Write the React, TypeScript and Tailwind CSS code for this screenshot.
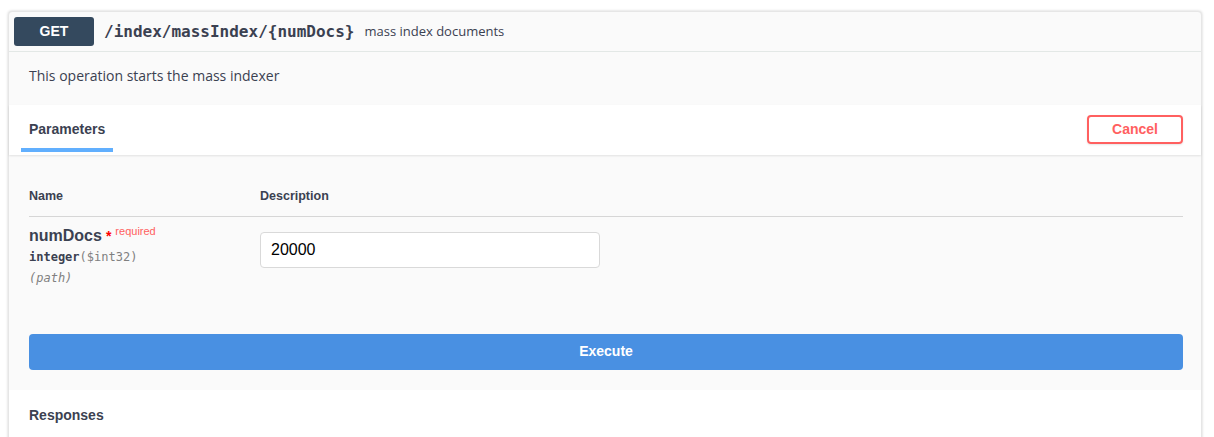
import React from "react";

export default function App() {
  const sans = { fontFamily: '"Liberation Sans", Arial, sans-serif' };
  return (
    <div className="w-[1214px] h-[437px] bg-white overflow-hidden pt-[11px] pl-[8px] pr-[12px]" style={sans}>
      <div className="border border-[#e6e6e6] rounded-[4px] bg-[#fafafa] shadow-[0_0_3px_rgba(0,0,0,0.19)] text-[#3b4151]">
        {/* summary */}
        <div className="flex items-center p-[5px] border-b border-[#e3e8e6]">
          <span className="w-[80px] h-[29px] rounded-[3px] bg-[#34495e] text-white text-[14px] font-bold flex items-center justify-center">GET</span>
          <span className="ml-[10px] text-[16px] font-semibold text-[#3b4151]" style={{ fontFamily: '"DejaVu Sans Mono", monospace' }}>/index/massIndex/&#123;numDocs&#125;</span>
          <span className="ml-[10px] text-[13px] text-[#3b4151]" style={{ fontFamily: '"Open Sans", sans-serif' }}>mass index documents</span>
        </div>
        {/* description */}
        <div className="px-[20px] h-[53px] pt-[14px] text-[14px] leading-[20px]" style={{ fontFamily: '"Open Sans", sans-serif' }}>
          This operation starts the mass indexer
        </div>
        {/* params header */}
        <div className="h-[50px] bg-white shadow-[0_1px_2px_rgba(0,0,0,0.1)] flex items-center justify-between pl-[12px] pr-[18px]">
          <div className="self-stretch flex flex-col justify-end">
            <div className="px-[8px] text-[14px] font-bold pb-[8px]">Parameters</div>
            <div className="h-[4px] w-[92px] bg-[#61affe] mb-[3px]"></div>
          </div>
          <button className="w-[96px] h-[29px] border-2 border-[#ff6060] rounded-[4px] text-[#ff6060] text-[14px] font-bold bg-transparent shadow-[0_1px_2px_rgba(0,0,0,0.1)] -mt-[1px]">Cancel</button>
        </div>
        {/* table */}
        <div className="pl-[20px] pr-[18px] pt-[32px]">
          <div className="flex text-[12.5px] font-bold border-b border-[#d6d6d6] pb-[10px]">
            <div className="w-[231px]">Name</div>
            <div>Description</div>
          </div>
          <div className="flex pt-[9px]">
            <div className="w-[231px]">
              <div className="flex items-start">
                <span className="text-[16px] font-bold leading-[20px]">numDocs</span>
                <span className="text-[#ff0000] text-[14px] font-bold ml-[4px] leading-[16px] mt-[2px]">*</span>
                <span className="text-[#ff6060] text-[11px] ml-[4px] leading-[12px] -mt-[1px]">required</span>
              </div>
              <div className="text-[12px] mt-[3px] leading-[16px]" style={{ fontFamily: '"DejaVu Sans Mono", monospace' }}>
                <span className="font-bold">integer</span>
                <span className="text-[#808080]">($int32)</span>
              </div>
              <div className="text-[12px] italic text-[#808080] mt-[5px] leading-[16px]" style={{ fontFamily: '"DejaVu Sans Mono", monospace' }}>(path)</div>
            </div>
            <div className="pt-[6px]">
              <div className="w-[340px] h-[36px] border border-[#d9d9d9] rounded-[4px] bg-white flex items-center px-[10px] text-[16px] text-black">20000</div>
            </div>
          </div>
          <div className="pt-[48px] pb-[20px]">
            <button className="w-full h-[36px] rounded-[4px] bg-[#4990e2] text-white text-[14px] font-bold">Execute</button>
          </div>
        </div>
        {/* responses */}
        <div className="bg-white px-[20px] pt-[15px] h-[60px] text-[14px] font-bold">Responses</div>
      </div>
    </div>
  );
}
